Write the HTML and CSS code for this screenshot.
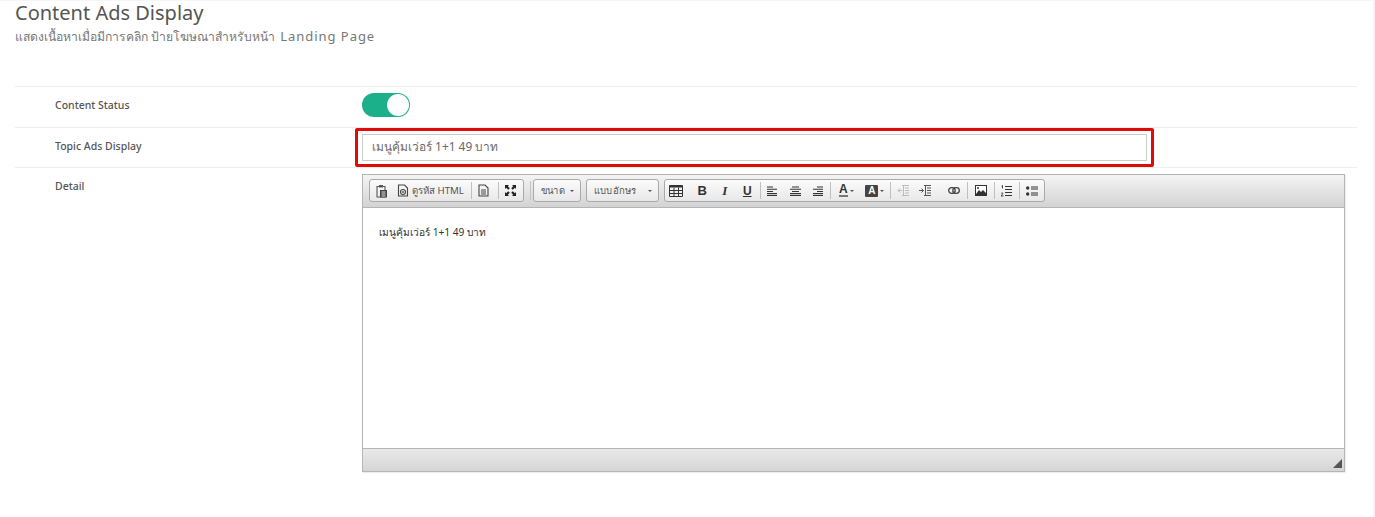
FILE: index.html
```html
<!DOCTYPE html>
<html lang="th">
<head>
<meta charset="utf-8">
<title>Content Ads Display</title>
<link rel="stylesheet" href="styles.css">
</head>
<body>
<main class="page">
  <header class="head">
    <h1 class="title">Content Ads Display</h1>
    <p class="sub">แสดงเนื้อหาเมื่อมีการคลิก ป้ายโฆษณาสำหรับหน้า <span class="sub-latin">Landing Page</span></p>
  </header>
  <section class="form">
    <div class="row row-status">
      <div class="label">Content Status</div>
      <div class="value"><span class="switch"><span class="knob"></span></span></div>
    </div>
    <div class="row row-topic">
      <div class="label">Topic Ads Display</div>
      <div class="value"><div class="highlight"><div class="input">เมนูคุ้มเว่อร์ 1+1 49 บาท</div></div></div>
    </div>
    <div class="row row-detail">
      <div class="label">Detail</div>
      <div class="value">
        <div class="editor">
          <div class="toolbar">
            <div class="group group-file">
              <span class="btn btn-clip"><svg width="14" height="14" viewBox="0 0 14 14"><path d="M2 2.500h8v10.500H2z" fill="none" stroke="#555" stroke-width="1.100"/><path d="M4 1h4v2.500H4z" fill="#555"/><path d="M5 6h7v7.500H5z" fill="#444"/><path d="M6.500 8h4M6.500 10h4M6.500 12h4" stroke="#ddd"/></svg></span>
              <span class="btn btn-wide"><svg width="12" height="13" viewBox="0 0 12 13"><path d="M1.500 1h6l3 3v8h-9z" fill="none" stroke="#444" stroke-width="1.100"/><circle cx="6" cy="8" r="2.500" fill="none" stroke="#444" stroke-width="1.100"/><circle cx="6" cy="8" r=".9" fill="#444"/></svg><span class="btn-text">ดูรหัส HTML</span></span>
              <i class="sep"></i>
              <span class="btn btn-doc"><svg width="11" height="13" viewBox="0 0 11 13"><path d="M1 1h6l3 3v8H1z" fill="none" stroke="#444" stroke-width="1.100"/><path d="M3 6h5M3 8h5M3 10h5" stroke="#444"/></svg></span>
              <i class="sep"></i>
              <span class="btn btn-full"><svg width="13" height="13" viewBox="0 0 13 13"><path d="M1 1h4L3.800 2.200l2 2-1.600 1.600-2-2L1 5zM12 1v4l-1.200-1.200-2 2-1.600-1.600 2-2L8 1zM1 12V8l1.200 1.200 2-2 1.600 1.600-2 2L5 12zM12 12H8l1.200-1.200-2-2 1.600-1.600 2 2L12 8z" fill="#222"/></svg></span>
            </div>
            <i class="bar-sep"></i>
            <div class="group drop drop-size"><span class="drop-text">ขนาด</span><b class="caret"></b></div>
            <div class="group drop drop-font"><span class="drop-text">แบบอักษร</span><b class="caret"></b></div>
            <div class="group group-format">
              <span class="btn btn-table"><svg width="14" height="12" viewBox="0 0 14 12"><path d="M.5.500h13v11H.5z" fill="none" stroke="#333"/><path d="M.5 1h13v1.500H.5z" fill="#333"/><path d="M.5 5.500h13M.5 8.500h13M5 2.500v9M9.500 2.500v9" stroke="#333"/></svg></span>
              <span class="btn btn-letter btn-b">B</span>
              <span class="btn btn-letter btn-i">I</span>
              <span class="btn btn-letter btn-u">U</span>
              <i class="sep"></i>
              <span class="btn"><svg width="11" height="10" viewBox="0 0 11 10"><path d="M0 1h6M0 3.200h10M0 5.500h6M0 7.500h10" stroke="#333" stroke-width="1.100"/><path d="M0 9.500h10" stroke="#333" stroke-width="1.400"/></svg></span>
              <span class="btn"><svg width="11" height="10" viewBox="0 0 11 10"><path d="M2 1h7M0 3.200h11M2 5.500h7M0 7.500h11" stroke="#333" stroke-width="1.100"/><path d="M0 9.500h11" stroke="#333" stroke-width="1.400"/></svg></span>
              <span class="btn"><svg width="11" height="10" viewBox="0 0 11 10"><path d="M5 1h6M1 3.200h10M5 5.500h6M1 7.500h10" stroke="#333" stroke-width="1.100"/><path d="M1 9.500h10" stroke="#333" stroke-width="1.400"/></svg></span>
              <i class="sep"></i>
              <span class="btn btn-color"><span class="a-under">A</span><b class="mini-caret"></b></span>
              <span class="btn btn-color"><span class="a-box">A</span><b class="mini-caret"></b></span>
              <i class="sep"></i>
              <span class="btn"><svg width="13" height="11" viewBox="0 0 13 11"><path d="M5 .500h7M8 3h4M8 5.500h4M8 8h4M5 10.500h7M6.500 0v11M1 5.500h4M3 3.500l-2 2 2 2" stroke="#bbb" fill="none"/></svg></span>
              <span class="btn"><svg width="13" height="11" viewBox="0 0 13 11"><path d="M5 .500h7M8 3h4M8 5.500h4M8 8h4M5 10.500h7M6.500 0v11M0 5.500h4.500M2.500 3.500l2 2-2 2" stroke="#555" fill="none"/></svg></span>
              <span class="btn btn-link"><svg width="12" height="7" viewBox="0 0 12 7"><rect x=".7" y=".7" width="6.500" height="5.600" rx="2.800" fill="none" stroke="#444" stroke-width="1.300"/><rect x="4.800" y=".7" width="6.500" height="5.600" rx="2.800" fill="none" stroke="#444" stroke-width="1.300"/></svg></span>
              <i class="sep"></i>
              <span class="btn btn-image"><svg width="12" height="11" viewBox="0 0 12 11"><path d="M0 0h12v11H0z" fill="#333"/><path d="M1 1h10v9H1z" fill="#fff"/><path d="M1 9l3-4 2 2 2-2 3 3v2H1z" fill="#333"/><circle cx="3" cy="3" r="1" fill="#333"/></svg></span>
              <i class="sep"></i>
              <span class="btn"><svg width="11" height="12" viewBox="0 0 11 12"><path d="M4 1.500h7M4 4.500h7M4 7.500h7M4 10.500h7" stroke="#333"/><path d="M.5 1.200l1-.7v3M0 8.500c1-1.500 2.500-.5 1.500.7L0 11h2.500" stroke="#333" fill="none" stroke-width=".9"/></svg></span>
              <i class="sep"></i>
              <span class="btn"><svg width="12" height="10" viewBox="0 0 12 10"><circle cx="1.700" cy="2" r="1.700" fill="#333"/><circle cx="1.700" cy="8" r="1.700" fill="#333"/><path d="M5 1h7M5 3h7M5 7h7M5 9h7" stroke="#333"/></svg></span>
            </div>
          </div>
          <div class="content">เมนูคุ้มเว่อร์ 1+1 49 บาท</div>
          <div class="statusbar"><svg class="grip" width="9" height="9" viewBox="0 0 9 9"><path d="M9 0v9H0z" fill="#555"/></svg></div>
        </div>
      </div>
    </div>
  </section>
</main>
</body>
</html>
```

FILE: styles.css
```css
* { box-sizing: border-box; }
html, body { margin: 0; height: 100%; }
body {
  background: #fff;
  font-family: "Noto Sans", "Noto Sans CJK SC", sans-serif;
  color: #555;
  overflow: hidden;
}
.page {
  height: 517px;
  padding: 0 18px 0 15px;
  border-top: 1px solid #f6f6f6;
  box-shadow: inset -2px 0 0 #f5f5f7;
}
.head { height: 85px; }
.title { margin: 0; font-size: 20px; line-height: 24px; font-weight: 400; color: #555; }
.sub { margin: 0; font-size: 12.150px; line-height: 23px; color: #777; }
.sub-latin { margin-left: 2px; font-size: 13px; letter-spacing: .95px; }
.row { display: grid; grid-template-columns: 347px 1fr; border-top: 1px solid #eeeeee; }
.label { padding-left: 40px; font-size: 10.500px; font-weight: 500; color: #555; }
.row-status { height: 41px; }
.row-status .label { line-height: 36px; }
.row-status .value { padding-top: 6px; }
.row-topic { height: 40px; }
.row-topic .label { line-height: 36px; }
.row-detail { padding-top: 6px; }
.row-detail .label { line-height: 24px; }
.row-detail .value { width: 983px; }
.switch { display: block; width: 48px; height: 24px; border-radius: 12px; background: #1cb08a; padding: 1px 1px 1px 25px; }
.knob { display: block; width: 22px; height: 22px; border-radius: 50%; background: #fff; }
.highlight { width: 799px; height: 39px; border: 3px solid #e00a0a; border-radius: 2px; padding: 3px 4px; margin-left: -7px; }
.input { height: 27px; border: 1px solid #ccc; padding: 0 9px; font-size: 11.900px; line-height: 23px; color: #6a6a6a; }
.editor { height: 298px; border: 1px solid #b5b5b5; display: flex; flex-direction: column; box-shadow: 1px 1px 1px #eee; }
.toolbar {
  height: 33px; flex: none;
  display: flex; align-items: flex-start; gap: 5px;
  padding: 4px 0 0 6px;
  background: linear-gradient(#f4f4f4, #d3d3d3);
  border-bottom: 1px solid #b5b5b5;
}
.group {
  height: 23px; display: flex; align-items: center; flex: none;
  border: 1px solid #a9a9a9; border-radius: 3px;
  background: linear-gradient(#fbfbfb, #e8e8e8);
}
.group-file { width: 155px; }
.group-format { width: 381px; }
.btn { display: flex; align-items: center; justify-content: center; height: 21px; width: 22.500px; flex: none; }
.btn-clip { width: 24px; }
.btn-wide { width: 77px; gap: 3px; justify-content: flex-start; padding-left: 3px; }
.btn-doc { width: 26px; padding-right: 4px; }
.btn-full { width: 23px; }
.btn-table { width: 21px; margin-right: 5px; }
.btn-link { width: 28.500px; padding-left: 5px; }
.btn-image { width: 24px; }
.btn-text { font-size: 9.700px; color: #555; white-space: nowrap; }
.btn-letter { font-family: "Liberation Sans", sans-serif; font-size: 13px; color: #333; }
.btn-b { font-weight: 700; }
.btn-i { font-style: italic; font-weight: 700; font-family: "Liberation Serif", serif; }
.btn-u { text-decoration: underline; font-weight: 700; font-size: 12px; }
.btn-color { gap: 2px; width: 28.500px; }
.a-under { font-family: "Liberation Sans", sans-serif; font-size: 12px; font-weight: 700; color: #333; border-bottom: 2px solid #777; line-height: 11px; }
.a-box { font-family: "Liberation Sans", sans-serif; font-size: 10px; font-weight: 700; color: #fff; background: #444; width: 13px; height: 12px; text-align: center; line-height: 12px; border-radius: 1px; }
.mini-caret { width: 0; height: 0; border: 2px solid transparent; border-top-color: #555; border-bottom: 0; }
.sep { width: 1px; height: 17px; background: #c0c0c0; flex: none; margin: 0 1px; }
.group-file .sep { margin: 0; }
.bar-sep { width: 1px; height: 19px; margin: 2px -3px 0 1px; background: #c4c4c4; flex: none; }
.drop { justify-content: space-between; padding: 0 6px 0 7px; }
.drop-size { width: 48px; }
.drop-font { width: 73px; }
.drop-text { font-size: 9.500px; color: #555; letter-spacing: .2px; }
.caret { width: 0; height: 0; border: 2.500px solid transparent; border-top-color: #555; border-bottom: 0; }
.content { flex: 1; background: #fff; padding: 16px 16px; font-size: 10.200px; line-height: 16px; color: #333; }
.statusbar {
  height: 23px; flex: none; position: relative;
  background: linear-gradient(#e9e9e9, #d5d5d5);
  border-top: 1px solid #b5b5b5;
}
.grip { position: absolute; right: 2px; bottom: 3px; }
```
